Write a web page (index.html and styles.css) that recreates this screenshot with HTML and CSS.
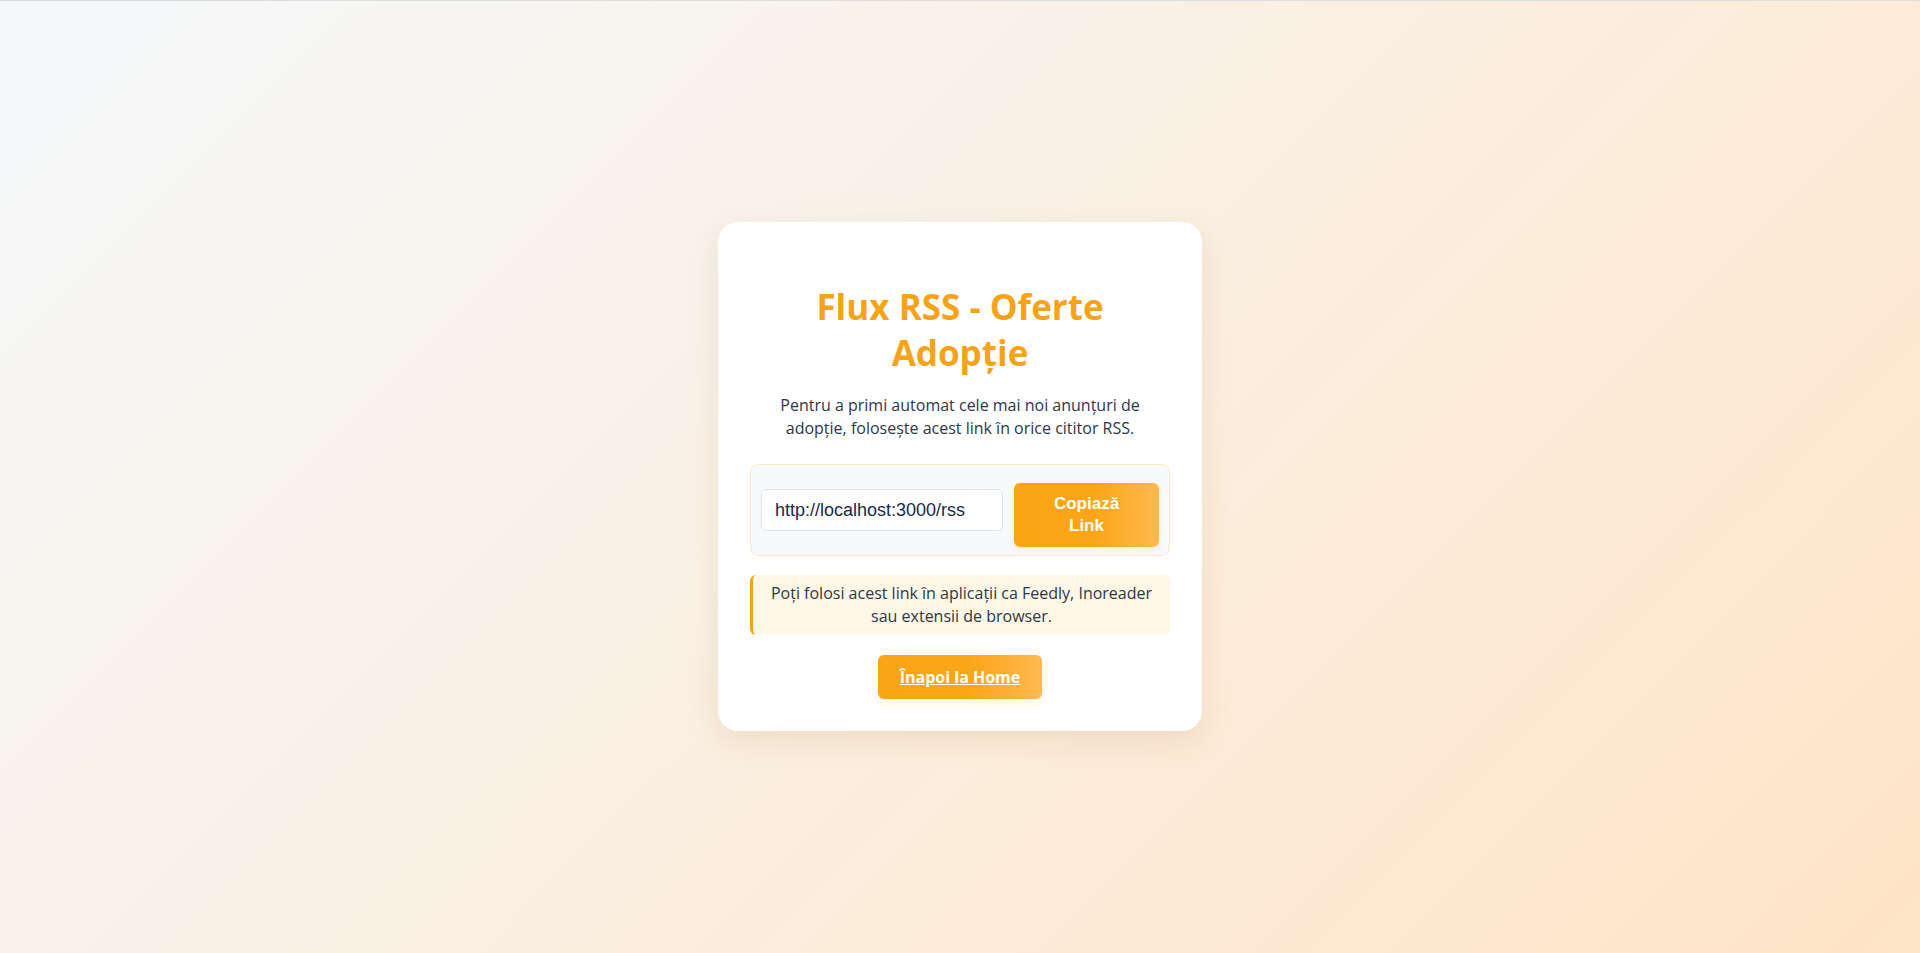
FILE: index.html
```html
<!DOCTYPE html>
<html lang="ro">
<head>
<meta charset="utf-8">
<title>Flux RSS - Oferte Adopție</title>
<link rel="stylesheet" href="styles.css">
</head>
<body>
<div class="page">
  <main class="card">
    <h1 class="title">Flux RSS - Oferte Adopție</h1>
    <p class="intro">Pentru a primi automat cele mai noi anunțuri de adopție, folosește acest link în orice cititor RSS.</p>
    <div class="link-box">
      <input class="link-input" type="text" value="http://localhost:3000/rss" readonly>
      <button class="copy-btn" type="button">Copiază Link</button>
    </div>
    <div class="notice">Poți folosi acest link în aplicații ca Feedly, Inoreader sau extensii de browser.</div>
    <div class="actions">
      <a class="home-btn" href="#">Înapoi la Home</a>
    </div>
  </main>
</div>
</body>
</html>
```

FILE: styles.css
```css
html, body {
  margin: 0;
  padding: 0;
}

body {
  font-family: "Open Sans", "Noto Sans", sans-serif;
  color: #2d3748;
  background: linear-gradient(135deg, #f5f8fb 0%, #faf0e4 45%, #ffe4c6 100%);
  min-height: 100vh;
}

.page {
  border-top: 1px solid #dcdedd;
  min-height: calc(100vh - 1px);
  display: flex;
  align-items: center;
  justify-content: center;
  box-sizing: border-box;
}

.card {
  width: 484px;
  box-sizing: border-box;
  background: #ffffff;
  border-radius: 20px;
  padding: 40px 32px 32px;
  text-align: center;
  box-shadow: 0 10px 30px rgba(160, 110, 50, 0.14);
}

.title {
  margin: 22px 20px 0;
  font-size: 35px;
  line-height: 46px;
  font-weight: 700;
  color: #f6a31c;
}

.intro {
  margin: 18px 0 0;
  font-size: 16px;
  line-height: 23px;
  color: #2d3748;
}

.link-box {
  margin-top: 24px;
  display: flex;
  align-items: center;
  gap: 11px;
  padding: 8px 10px;
  background: #f8f9fa;
  border: 1px solid #fde8c9;
  border-radius: 8px;
}

.link-input {
  flex: 1 1 auto;
  min-width: 0;
  height: 42px;
  box-sizing: border-box;
  padding: 0 13px;
  font-family: "Liberation Sans", Arial, sans-serif;
  font-size: 18px;
  color: #1c2a48;
  background: #ffffff;
  border: 1px solid #dfe2e6;
  border-radius: 5px;
  outline: none;
}

.copy-btn {
  flex: 0 0 145px;
  height: 64px;
  margin-top: 10px;
  padding: 0 24px;
  border: none;
  border-radius: 6px;
  font-family: "Liberation Sans", Arial, sans-serif;
  font-size: 17px;
  line-height: 22px;
  font-weight: 700;
  color: #ffffff;
  background: linear-gradient(90deg, #fba416 0%, #fca517 55%, #ffb94f 100%);
  box-shadow: 0 2px 6px rgba(251, 164, 22, 0.15);
  cursor: pointer;
}

.notice {
  margin-top: 19px;
  padding: 7px 12px;
  background: #fff8e6;
  border-left: 3px solid #f7a21b;
  border-radius: 6px;
  font-size: 16px;
  line-height: 23px;
  color: #2d3748;
}

.actions {
  margin-top: 20px;
}

.home-btn {
  display: inline-block;
  padding: 11px 22px;
  border-radius: 6px;
  font-size: 16px;
  line-height: 22px;
  font-weight: 700;
  color: #ffffff;
  text-decoration: underline;
  background: linear-gradient(90deg, #fba416 0%, #fca517 55%, #ffb94f 100%);
  box-shadow: 0 4px 12px rgba(251, 164, 22, 0.15);
}
```
